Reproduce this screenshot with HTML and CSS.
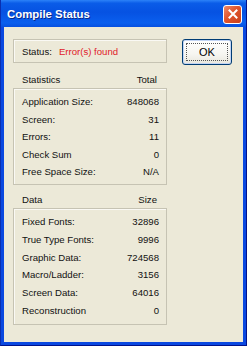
FILE: index.html
```html
<!DOCTYPE html>
<html lang="en">
  <head>
    <meta charset="UTF-8" />
    <title>Compile Status</title>
    <link rel="stylesheet" href="styles.css">
  </head>
  <body>
    <div class="window">
      <div class="titlebar">
        <span class="title">Compile Status</span>
        <button class="close" title="Close">
          <svg width="10" height="10" viewBox="0 0 10 10">
            <path d="M1.5 1.5 L8.5 8.5 M8.5 1.5 L1.5 8.5" stroke="#fff" stroke-width="2" stroke-linecap="square" />
          </svg>
        </button>
      </div>

      <div class="client">
        <div class="panel">
          <div class="box status">
            <span>Status:</span>
            <span class="error">Error(s) found</span>
          </div>

          <div class="header"><span>Statistics</span><span>Total</span></div>
          <div class="box list">
            <div class="row"><span>Application Size:</span><span>848068</span></div>
            <div class="row"><span>Screen:</span><span>31</span></div>
            <div class="row"><span>Errors:</span><span>11</span></div>
            <div class="row"><span>Check Sum</span><span>0</span></div>
            <div class="row"><span>Free Space Size:</span><span>N/A</span></div>
          </div>

          <div class="header second"><span>Data</span><span>Size</span></div>
          <div class="box list data">
            <div class="row"><span>Fixed Fonts:</span><span>32896</span></div>
            <div class="row"><span>True Type Fonts:</span><span>9996</span></div>
            <div class="row"><span>Graphic Data:</span><span>724568</span></div>
            <div class="row"><span>Macro/Ladder:</span><span>3156</span></div>
            <div class="row"><span>Screen Data:</span><span>64016</span></div>
            <div class="row"><span>Reconstruction</span><span>0</span></div>
          </div>
        </div>

        <button class="ok"><span class="focus">OK</span></button>
      </div>
    </div>
  </body>
</html>
```

FILE: styles.css
```css
body {
  margin: 0;
  font-family: 'Liberation Sans', Arial, sans-serif;
  font-size: 9.6px;
  color: #111;
}

.window {
  width: 247px;
  height: 346px;
  box-sizing: border-box;
  display: flex;
  flex-direction: column;
  background-color: #0a48e0;
  border-left: 1px solid #0a2fb0;
  border-right: 1px solid #00138c;
  border-bottom: 1px solid #00138c;
}

.titlebar {
  height: 27px;
  display: flex;
  align-items: center;
  justify-content: space-between;
  padding: 0 4px 0 6px;
  background: linear-gradient(#2c82f8 0%, #0a5ce8 12%, #0652e2 45%, #0a5fee 85%, #0650e0 100%);
}

.title {
  color: #fff;
  font-weight: bold;
  font-size: 11.4px;
  text-shadow: 1px 1px 0 #0a2a8a;
}

.close {
  width: 19px;
  height: 19px;
  padding: 0;
  display: flex;
  align-items: center;
  justify-content: center;
  border: 1px solid #fff;
  border-radius: 3px;
  background: linear-gradient(135deg, #ee8a6a 0%, #e0542c 45%, #c8401c 100%);
  margin-top: 1px;
}

.client {
  flex: 1;
  display: flex;
  align-items: flex-start;
  margin: 0 3px 3px 3px;
  padding: 12px 0 0 9px;
  background-color: #ece9d8;
}

.panel {
  width: 154px;
}

.box {
  border: 1px solid #c6c3b3;
  box-shadow: inset 1px 1px 0 #faf9f4;
}

.status {
  height: 22px;
  display: flex;
  align-items: center;
  gap: 7px;
  padding: 0 8px;
}

.error {
  color: #e0202a;
}

.header {
  display: flex;
  justify-content: space-between;
  height: 16px;
  line-height: 16px;
  margin-top: 9px;
  padding: 0 10px 0 9px;
}

.header.second {
  margin-top: 7px;
}

.list {
  padding: 4px 7px 3px 8px;
}

.data {
  padding-bottom: 4px;
}

.row {
  display: flex;
  justify-content: space-between;
  height: 17.6px;
  line-height: 17.6px;
}

.data .row {
  height: 17.8px;
  line-height: 17.8px;
}

.ok {
  width: 50px;
  height: 26px;
  margin-left: 15px;
  padding: 3px;
  border: 1px solid #003c74;
  border-radius: 3px;
  background: linear-gradient(#fff 0%, #f6f5f0 60%, #e8e6dc 100%);
  box-shadow: inset 0 0 0 1px #c2d4f4;
  font-family: 'Liberation Sans', Arial, sans-serif;
  font-size: 11px;
  color: #000;
}

.focus {
  display: flex;
  align-items: center;
  justify-content: center;
  height: 100%;
  box-sizing: border-box;
  border: 1px dotted #555;
}
```
